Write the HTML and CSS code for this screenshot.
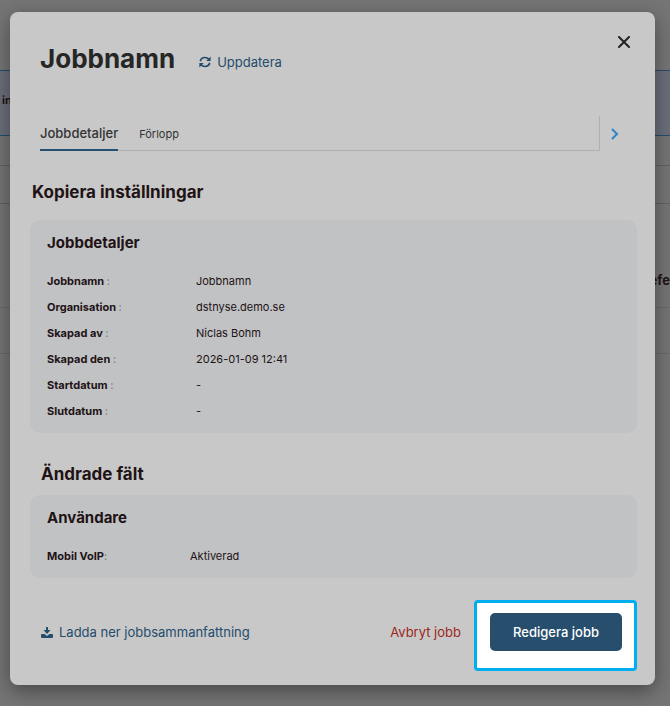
FILE: index.html
```html
<!DOCTYPE html>
<html lang="sv">
<head>
    <meta charset="UTF-8">
    <meta name="viewport" content="width=device-width, initial-scale=1.0">
    <title>Jobbnamn</title>
    <link rel="stylesheet" href="styles.css">
</head>
<body>
    <!-- Page behind the dialog -->
    <div class="page">
        <div class="toolbar"></div>
        <div class="banner"><strong>in</strong></div>
        <div class="filter-row"></div>
        <div class="filter-row filter-row-tall"></div>
        <div class="table-head"><strong>efe</strong></div>
        <div class="table-row"></div>
    </div>

    <div class="dialog" role="dialog" aria-labelledby="dialog-title">
        <button type="button" class="close" aria-label="Stäng">
            <svg width="12" height="12" viewBox="0 0 12 12"><path d="M1 1L11 11M11 1L1 11" fill="none" stroke="currentColor" stroke-width="2" stroke-linecap="round"/></svg>
        </button>

        <header class="dialog-header">
            <h1 id="dialog-title">Jobbnamn</h1>
            <button type="button" class="text-button">
                <svg width="12" height="12" viewBox="0 0 512 512" fill="none" stroke="currentColor" stroke-width="72">
                    <path d="M56 222C76 126 154 64 256 64C326 64 386 96 428 150M456 290C436 386 358 448 256 448C186 448 126 416 84 362"/>
                    <path d="M496 24V212H308ZM16 488V300H204Z" fill="currentColor" stroke="none"/>
                </svg>
                Uppdatera
            </button>
        </header>

        <div class="tabs">
            <div class="tab-list" role="tablist">
                <button type="button" class="tab active" role="tab" aria-selected="true">Jobbdetaljer</button>
                <button type="button" class="tab" role="tab" aria-selected="false">Förlopp</button>
            </div>
            <button type="button" class="tab-next" aria-label="Nästa">
                <svg width="8" height="12" viewBox="0 0 8 12"><path d="M1 1L6 6L1 11" fill="none" stroke="currentColor" stroke-width="2"/></svg>
            </button>
        </div>

        <section>
            <h2>Kopiera inställningar</h2>
            <div class="card">
                <h3>Jobbdetaljer</h3>
                <table>
                    <tr><th scope="row">Jobbnamn <span>:</span></th><td>Jobbnamn</td></tr>
                    <tr><th scope="row">Organisation <span>:</span></th><td>dstnyse.demo.se</td></tr>
                    <tr><th scope="row">Skapad av <span>:</span></th><td>Niclas Bohm</td></tr>
                    <tr><th scope="row">Skapad den <span>:</span></th><td>2026-01-09 12:41</td></tr>
                    <tr><th scope="row">Startdatum <span>:</span></th><td>-</td></tr>
                    <tr><th scope="row">Slutdatum <span>:</span></th><td>-</td></tr>
                </table>
            </div>
        </section>

        <section class="changes">
            <h2>Ändrade fält</h2>
            <div class="card">
                <h3>Användare</h3>
                <table>
                    <tr><th scope="row">Mobil VoIP<span>:</span></th><td>Aktiverad</td></tr>
                </table>
            </div>
        </section>

        <footer>
            <button type="button" class="text-button">
                <svg width="12" height="12" viewBox="0 0 12 12" fill="currentColor">
                    <path d="M5 1H7V4H9.5L6 8L2.500 4H5Z"/>
                    <path d="M1 8H3.500L6 10L8.500 8H11Q12 8 12 9V11Q12 12 11 12H1Q0 12 0 11V9Q0 8 1 8Z"/>
                </svg>
                Ladda ner jobbsammanfattning
            </button>
            <button type="button" class="text-button cancel">Avbryt jobb</button>
            <div class="highlight">
                <button type="button" class="primary">Redigera jobb</button>
            </div>
        </footer>
    </div>
</body>
</html>
```

FILE: styles.css
```css
* {
    box-sizing: border-box;
}

body {
    font-family: Inter, sans-serif;
    font-size: 11px;
    color: #1f1315;
    background-color: #757575;
    margin: 0;
    position: relative;
}

button {
    font-family: inherit;
    background: none;
    border: none;
    padding: 0;
    cursor: pointer;
}

svg {
    display: block;
}

/* page behind */
.page {
    min-height: 100vh;
    overflow: hidden;
}

.toolbar {
    height: 70px;
}

.banner {
    height: 66px;
    padding: 22px 2px;
    background-color: #6b6f7a;
    border-top: 1px solid #244c70;
    border-bottom: 1px solid #244c70;
}

.filter-row {
    height: 30px;
    border-bottom: 1px solid #616161;
}

.filter-row-tall {
    height: 38px;
}

.table-head {
    height: 104px;
    padding-top: 68px;
    font-size: 13px;
    text-align: right;
    border-bottom: 1px solid #696969;
}

.table-row {
    height: 46px;
    border-bottom: 1px solid #696969;
}

/* dialog */
.dialog {
    position: absolute;
    top: 12px;
    left: 10px;
    right: 15px;
    padding: 31px 18px 34px 20px;
    background-color: #c8c8c8;
    border-radius: 8px;
    box-shadow: 0 6px 20px rgba(0, 0, 0, 0.4);
}

.close {
    position: absolute;
    top: 18px;
    right: 19px;
    padding: 6px;
    color: #222;
}

.dialog-header {
    display: flex;
    align-items: baseline;
    gap: 24px;
    padding-left: 10px;
}

h1 {
    margin: 0;
    font-size: 26px;
    line-height: 32px;
    color: #262626;
}

.text-button {
    display: flex;
    align-items: center;
    gap: 6px;
    font-size: 13px;
    line-height: 20px;
    color: #244c6b;
}

.tabs {
    display: flex;
    margin: 41px 8px 29px 10px;
}

.tab-list {
    flex: 1;
    display: flex;
    gap: 21px;
    height: 35px;
    border-bottom: 1px solid #b0b0b0;
    border-right: 1px solid #b0b0b0;
}

.tab {
    height: 35px;
    font-size: 11px;
    color: #333;
}

.tab.active {
    font-size: 13px;
    font-weight: 500;
    border-bottom: 2px solid #274f6f;
}

.tab-next {
    display: flex;
    align-items: center;
    justify-content: center;
    width: 29px;
    color: #2b84c8;
}

h2 {
    margin: 0 0 16px 2px;
    font-size: 17px;
    line-height: 24px;
}

.changes {
    margin-top: 29px;
}

.changes h2 {
    margin: 0 0 9px 11px;
}

.card {
    padding: 13px 17px 9px;
    background-color: #c0c2c4;
    border-radius: 10px;
}

h3 {
    margin: 0 0 15px;
    font-size: 15px;
    line-height: 20px;
}

table {
    width: 100%;
    border-collapse: collapse;
}

th,
td {
    height: 26px;
    padding: 0;
    text-align: left;
}

th {
    width: 149px;
}

.changes th {
    width: 143px;
}

th span {
    font-weight: 400;
    color: #777;
}

footer {
    display: flex;
    align-items: center;
    gap: 29px;
    margin-top: 35px;
    padding: 0 15px 0 11px;
}

.cancel {
    margin-left: auto;
    color: #9c2620;
}

.highlight {
    position: relative;
}

/* white callout frame round the main button */
.highlight::before {
    content: "";
    position: absolute;
    inset: -13px -15px -20px -16px;
    background-color: white;
    border: 3px solid #00aeef;
    border-radius: 4px;
}

.primary {
    position: relative;
    height: 38px;
    width: 132px;
    font-size: 13px;
    font-weight: 500;
    color: white;
    background-color: #274f6d;
    border-radius: 5px;
}
```
